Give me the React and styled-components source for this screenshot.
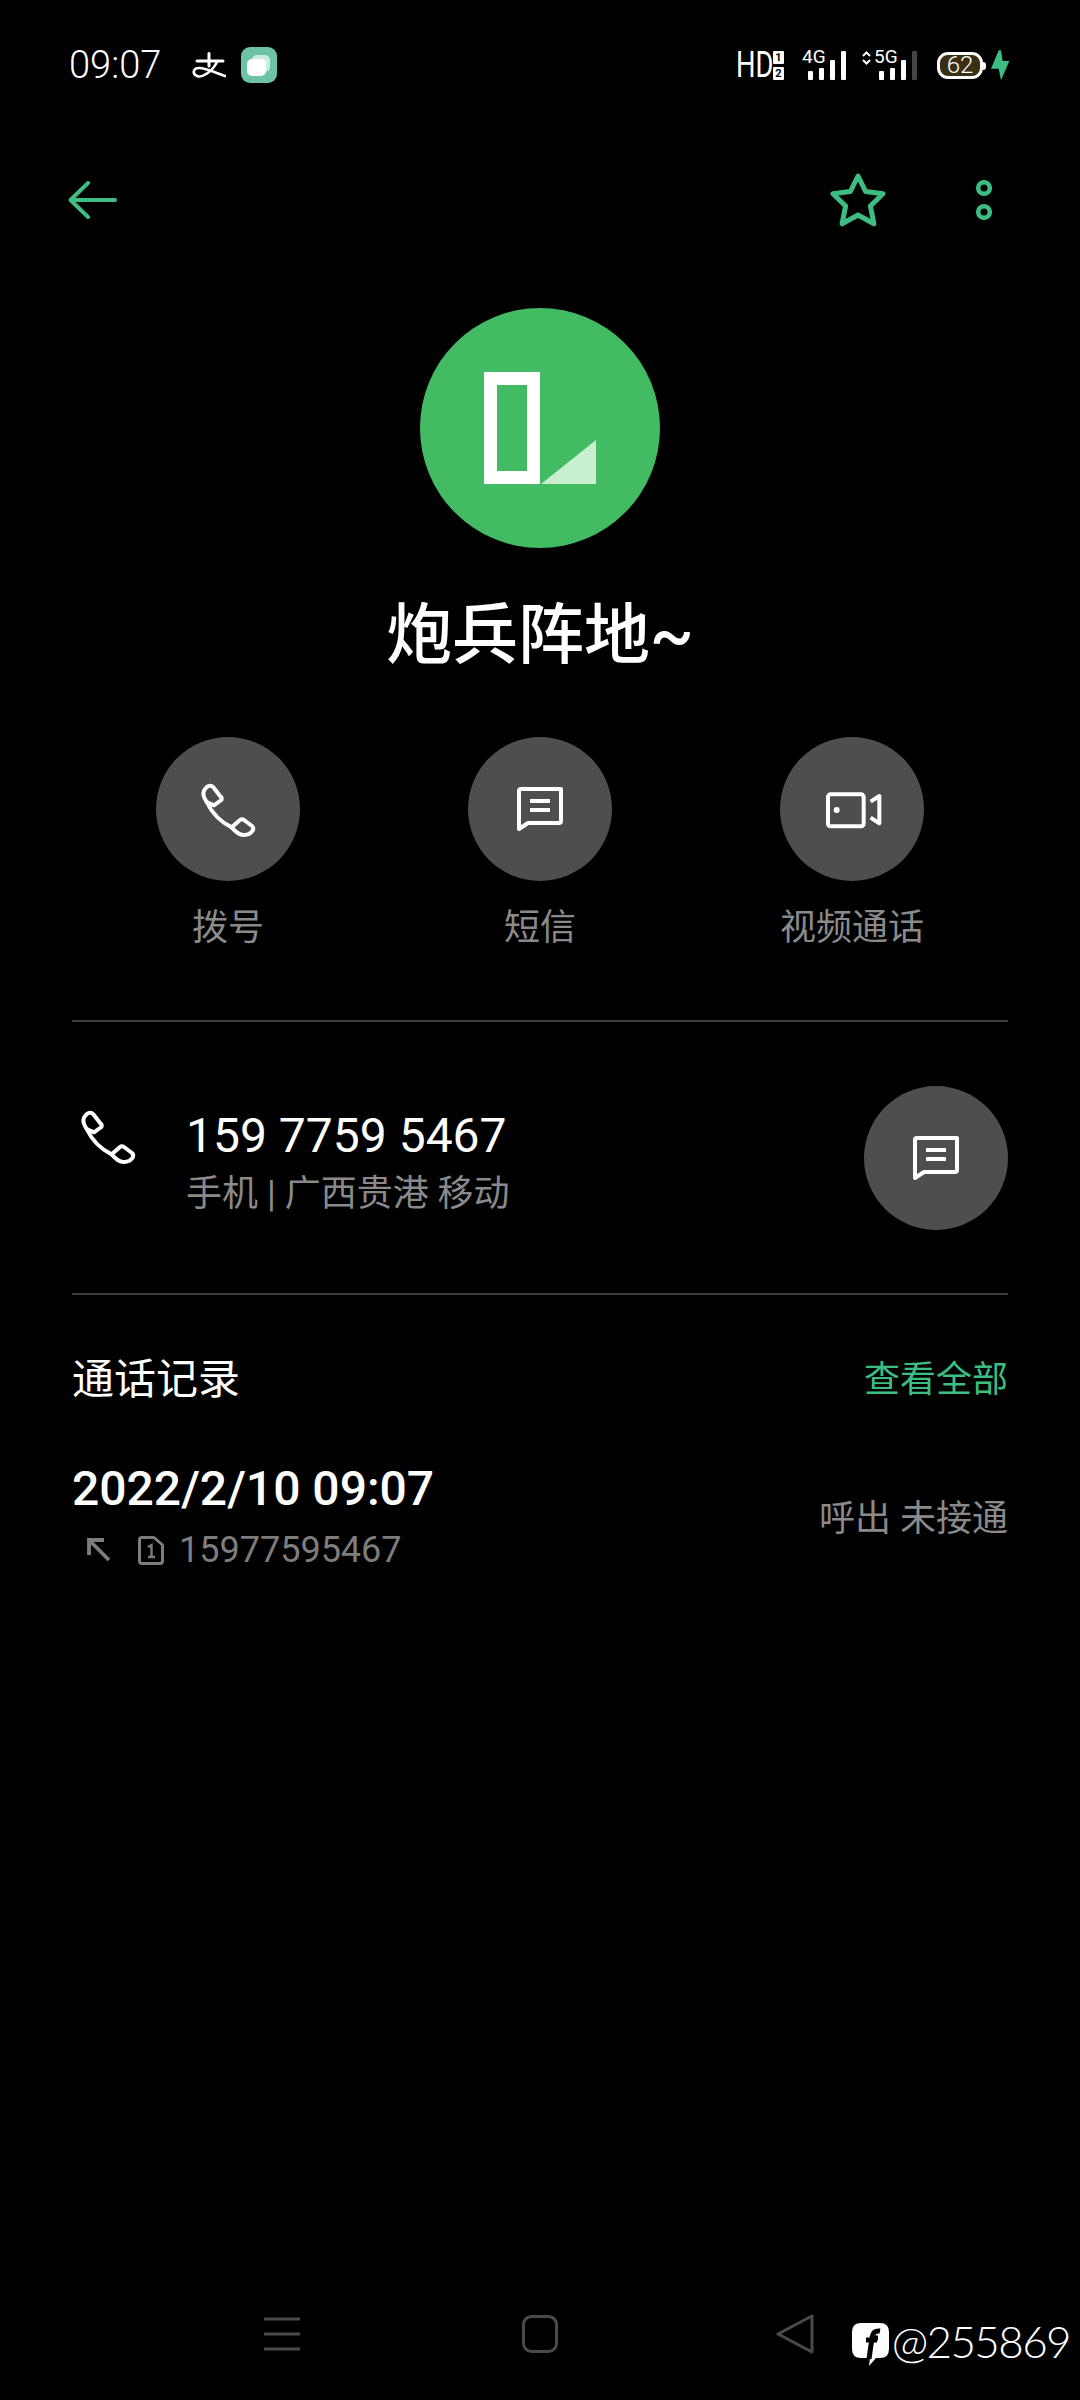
import React from "react";
import styled, { createGlobalStyle } from "styled-components";

const GREEN = "#3dbd82";
const GREY = "#8a8a8a";
const FONT = `Roboto, "Noto Sans CJK SC", sans-serif`;

const Global = createGlobalStyle`
  html, body { margin: 0; padding: 0; background: #000; }
  * { box-sizing: border-box; }
`;

const Page = styled.div`
  width: 1080px;
  height: 2400px;
  background: #000;
  color: #fff;
  font-family: ${FONT};
  display: flex;
  flex-direction: column;
  position: relative;
  overflow: hidden;
`;

const StatusBar = styled.div`
  height: 130px;
  padding: 0 70px 0 69px;
  display: flex;
  align-items: center;
  justify-content: space-between;
`;
const StatusLeft = styled.div`
  display: flex;
  align-items: center;
`;
const Clock = styled.span`
  font-size: 38px;
  font-weight: 300;
  line-height: 40px;
  width: 93px;
  margin-right: 30px;
`;
const AlipaySlot = styled.svg`
  margin-right: 15px;
`;
const StatusRight = styled.div`
  display: flex;
  align-items: center;
  height: 36px;
`;
const HdText = styled.span`
  display: block;
  width: 36px;
  font-size: 36px;
  line-height: 30px;
  font-weight: 400;
  transform: scaleX(0.76);
  transform-origin: left center;
`;
const SimStack = styled.div`
  display: flex;
  flex-direction: column;
  gap: 3px;
  margin-left: 1px;
  margin-right: 18px;
`;
const SimBadge = styled.span`
  display: block;
  width: 11px;
  height: 13px;
  border-radius: 1px;
  background: #fff;
  color: #000;
  font-size: 11px;
  line-height: 13px;
  font-weight: 700;
  text-align: center;
`;
const Signal = styled.div`
  position: relative;
  width: ${(p) => p.$w}px;
  height: 30px;
  display: flex;
  align-items: flex-end;
  justify-content: flex-end;
  gap: 6px;
  margin-right: ${(p) => p.$mr}px;
`;
const SignalLabel = styled.span`
  position: absolute;
  left: ${(p) => p.$left || 0}px;
  top: -3px;
  font-size: 19px;
  line-height: 20px;
  font-weight: 400;
`;
const Bar = styled.span`
  display: block;
  width: 5px;
  height: ${(p) => p.$h}px;
  border-radius: 1px;
  background: ${(p) => (p.$off ? "#444" : "#fff")};
`;
const Arrows = styled.svg`
  position: absolute;
  left: 0;
  top: 1px;
`;
const Battery = styled.div`
  position: relative;
  width: 46px;
  height: 27px;
  border: 3px solid #fff;
  border-radius: 11px;
  background: #3a2f12;
  display: flex;
  align-items: center;
  justify-content: center;
  font-size: 24px;
  font-weight: 300;
  line-height: 20px;
`;
const BatteryNib = styled.span`
  position: absolute;
  right: -6px;
  top: 7px;
  width: 3px;
  height: 8px;
  border-radius: 0 3px 3px 0;
  background: #fff;
`;
const Bolt = styled.svg`
  margin-left: 8px;
`;

const TopBar = styled.div`
  height: 140px;
  padding: 0 68px;
  display: flex;
  align-items: center;
  justify-content: space-between;
`;
const TopActions = styled.div`
  display: flex;
  align-items: center;
  gap: 90px;
  padding-right: 20px;
`;

const AvatarCircle = styled.div`
  width: 240px;
  height: 240px;
  margin: 38px auto 0;
  border-radius: 50%;
  background: #43bb63;
  display: flex;
`;
const Name = styled.h1`
  margin: 48px 0 0;
  height: 80px;
  font-size: 66px;
  line-height: 80px;
  font-weight: 500;
  text-align: center;
`;

const Actions = styled.div`
  margin-top: 61px;
  padding: 0 72px;
  display: grid;
  grid-template-columns: repeat(3, 312px);
`;
const Action = styled.div`
  display: flex;
  flex-direction: column;
  align-items: center;
  gap: 23px;
`;
const RoundButton = styled.div`
  width: 144px;
  height: 144px;
  border-radius: 50%;
  background: #4e4e4e;
  display: flex;
  align-items: center;
  justify-content: center;
`;
const ActionLabel = styled.span`
  font-size: 36px;
  line-height: 48px;
  color: ${GREY};
`;

const Divider = styled.div`
  height: 2px;
  margin: ${(p) => p.$mt || 0}px 72px 0;
  background: #3c3c3c;
`;

const PhoneRow = styled.div`
  height: 271px;
  padding: 0 72px 0 0;
  display: flex;
  align-items: center;
`;
const PhoneIconSlot = styled.div`
  width: 186px;
  padding-left: 68px;
  display: flex;
  margin-top: -44px;
`;
const PhoneText = styled.div`
  flex: 1;
  padding-top: 9px;
  display: flex;
  flex-direction: column;
  gap: 3px;
`;
const PhoneNumber = styled.div`
  font-size: 48px;
  line-height: 60px;
`;
const PhoneMeta = styled.div`
  font-size: 36px;
  line-height: 50px;
  color: ${GREY};
`;

const LogHeader = styled.div`
  height: 164px;
  padding: 6px 72px 0;
  display: flex;
  align-items: center;
  justify-content: space-between;
`;
const LogTitle = styled.span`
  font-size: 42px;
  line-height: 56px;
`;
const LogLink = styled.span`
  font-size: 36px;
  line-height: 48px;
  color: ${GREEN};
`;
const LogRow = styled.div`
  padding: 0 72px;
  display: flex;
  align-items: center;
  justify-content: space-between;
`;
const LogMain = styled.div`
  display: flex;
  flex-direction: column;
  gap: 6px;
`;
const LogDate = styled.div`
  font-size: 48px;
  line-height: 60px;
  font-weight: 500;
`;
const LogSub = styled.div`
  display: flex;
  align-items: center;
  height: 50px;
  padding-left: 15px;
  gap: 18px;
  font-size: 36px;
  color: #7d7d7d;
`;
const SimIcon = styled.svg`
  margin: 0 -3px 0 9px;
`;
const LogStatus = styled.span`
  margin-top: 3px;
  font-size: 36px;
  line-height: 48px;
  color: ${GREY};
`;

const NavBar = styled.div`
  margin-top: auto;
  height: 132px;
  display: flex;
  align-items: center;
  justify-content: center;
`;
const NavSlot = styled.div`
  width: 258px;
  padding-right: ${(p) => p.$pr || 0}px;
  display: flex;
  justify-content: center;
`;
const Watermark = styled.div`
  position: absolute;
  right: 10px;
  bottom: 34px;
  display: flex;
  align-items: center;
  gap: 3px;
  font-family: Lato, sans-serif;
  font-weight: 300;
  font-size: 44px;
  line-height: 50px;
  letter-spacing: -1.6px;
  color: #fff;
`;
const WatermarkLogo = styled.svg`
  margin-top: 6px;
`;

const PhoneIcon = () => (
  <svg width="80" height="80" viewBox="-6 -3 240 240" fill="none" stroke="#fff" strokeWidth="12" strokeLinejoin="round" strokeLinecap="round">
    <path d="M60 47 Q50 47 42 62 Q36 75 50 96 L72 106 L94 90 Q97 84 92 80 L70 52 Q66 47 60 47 Z" />
    <path d="M125 172 L150 150 Q155 146 162 150 L186 168 Q192 174 188 182 Q178 196 160 195 Q145 195 125 172 Z" />
    <path d="M50 96 Q75 148 125 172" />
  </svg>
);

const MessageIcon = () => (
  <svg width="46" height="44" viewBox="0 0 46 44" fill="none">
    <path d="M2 42 V4 Q2 2 4 2 H44 V34 Q44 36 42 36 H11 Z" stroke="#fff" strokeWidth="4" strokeLinejoin="round" />
    <path d="M13 14 H33 M13 23 H33" stroke="#fff" strokeWidth="4" />
  </svg>
);

const VideoIcon = () => (
  <svg width="100" height="80" viewBox="6 -3 300 240" fill="none" stroke="#fff" strokeWidth="12" strokeLinejoin="round">
    <rect x="84" y="73" width="107" height="96" rx="8" />
    <circle cx="110" cy="120" r="9" fill="#fff" stroke="none" />
    <path d="M212 95 L238 78 V160 L212 143" />
  </svg>
);

const AppBadge = () => (
  <svg width="36" height="36" viewBox="0 0 36 36">
    <rect width="36" height="36" rx="9" fill="#6cc4a4" />
    <rect x="11" y="8" width="18" height="17" rx="5" fill="#c9ecdf" />
    <rect x="6" y="12" width="19" height="17" rx="5" fill="#fff" />
  </svg>
);

const AlipayGlyph = () => (
  <AlipaySlot width="34" height="26" viewBox="0 0 34 26" fill="none" stroke="#fff" strokeLinecap="round">
    <path d="M5 9 H31" strokeWidth="3" />
    <path d="M17 1.5 V14" strokeWidth="3" />
    <path d="M25 10 C20 20 10 26 5 24 C0 22 1 16 7 16 C14 16 24 21 33 24" strokeWidth="2.6" />
  </AlipaySlot>
);

export default function App() {
  return (
    <Page>
      <Global />
      <StatusBar>
        <StatusLeft>
          <Clock>09:07</Clock>
          <AlipayGlyph />
          <AppBadge />
        </StatusLeft>
        <StatusRight>
          <HdText>HD</HdText>
          <SimStack>
            <SimBadge>1</SimBadge>
            <SimBadge>2</SimBadge>
          </SimStack>
          <Signal $w={44} $mr={16}>
            <SignalLabel>4G</SignalLabel>
            <Bar $h={9} />
            <Bar $h={12} />
            <Bar $h={20} />
            <Bar $h={29} />
          </Signal>
          <Signal $w={55} $mr={20}>
            <Arrows width="9" height="14" viewBox="0 0 9 14" fill="none" stroke="#fff" strokeWidth="2">
              <path d="M1 5 L4.5 1.5 L8 5 M1 9 L4.5 12.5 L8 9" />
            </Arrows>
            <SignalLabel $left={12}>5G</SignalLabel>
            <Bar $h={9} />
            <Bar $h={12} />
            <Bar $h={20} />
            <Bar $h={29} $off />
          </Signal>
          <Battery>
            62
            <BatteryNib />
          </Battery>
          <Bolt width="19" height="31" viewBox="0 0 19 31">
            <path d="M7.7 0.3 L0 18.7 H7.7 L10 30.3 L18.3 11 H11.7 L10 0.3 Z" fill={GREEN} />
          </Bolt>
        </StatusRight>
      </StatusBar>

      <TopBar>
        <svg width="50" height="38" viewBox="0 0 50 38" fill="none" stroke={GREEN} strokeWidth="4" strokeLinecap="round" strokeLinejoin="round">
          <path d="M2.5 19 H47 M20 2 L2.5 19 L20 36" />
        </svg>
        <TopActions>
          <svg width="56" height="54" viewBox="0 0 56 54" fill="none" stroke={GREEN} strokeWidth="5" strokeLinejoin="round">
            <path d="M28 3 L35.6 18.5 L53 20.7 L40.4 33 L43.9 50.8 L28 42 L12.1 50.8 L15.6 33 L3 20.7 L20.4 18.5 Z" />
          </svg>
          <svg width="16" height="40" viewBox="0 0 16 40" fill="none" stroke={GREEN} strokeWidth="4.5">
            <circle cx="8" cy="8" r="5.8" />
            <circle cx="8" cy="32" r="5.8" />
          </svg>
        </TopActions>
      </TopBar>

      <AvatarCircle>
        <svg width="240" height="240" viewBox="0 0 240 240" fill="none">
          <rect x="70.5" y="70.5" width="43" height="99" stroke="#fff" strokeWidth="13" />
          <path d="M121 176 H176 V132 Z" fill="#c9efd1" />
        </svg>
      </AvatarCircle>
      <Name>炮兵阵地~</Name>

      <Actions>
        <Action>
          <RoundButton><PhoneIcon /></RoundButton>
          <ActionLabel>拨号</ActionLabel>
        </Action>
        <Action>
          <RoundButton><MessageIcon /></RoundButton>
          <ActionLabel>短信</ActionLabel>
        </Action>
        <Action>
          <RoundButton><VideoIcon /></RoundButton>
          <ActionLabel>视频通话</ActionLabel>
        </Action>
      </Actions>

      <Divider $mt={68} />
      <PhoneRow>
        <PhoneIconSlot><PhoneIcon /></PhoneIconSlot>
        <PhoneText>
          <PhoneNumber>159 7759 5467</PhoneNumber>
          <PhoneMeta>手机 | 广西贵港 移动</PhoneMeta>
        </PhoneText>
        <RoundButton><MessageIcon /></RoundButton>
      </PhoneRow>
      <Divider />

      <LogHeader>
        <LogTitle>通话记录</LogTitle>
        <LogLink>查看全部</LogLink>
      </LogHeader>
      <LogRow>
        <LogMain>
          <LogDate>2022/2/10 09:07</LogDate>
          <LogSub>
            <svg width="24" height="24" viewBox="0 0 24 24" fill="none" stroke="#7d7d7d" strokeWidth="3.8">
              <path d="M2 17 V2 H17 M2 2 L22 22" />
            </svg>
            <SimIcon width="26" height="29" viewBox="0 0 26 29" fill="none">
              <path d="M4 1.5 H16 L24.5 9 V25 Q24.5 27.5 22 27.5 H4 Q1.5 27.5 1.5 25 V4 Q1.5 1.5 4 1.5 Z" stroke="#7d7d7d" strokeWidth="3" strokeLinejoin="round" />
              <path d="M10 11 L13.5 9 V21 M10 21 H17" stroke="#7d7d7d" strokeWidth="2.4" />
            </SimIcon>
            <span>15977595467</span>
          </LogSub>
        </LogMain>
        <LogStatus>呼出 未接通</LogStatus>
      </LogRow>

      <NavBar>
        <NavSlot>
          <svg width="36" height="34" viewBox="0 0 36 34" stroke="#4a4a4a" strokeWidth="3">
            <path d="M0 2 H36 M0 17 H36 M0 32 H36" />
          </svg>
        </NavSlot>
        <NavSlot>
          <svg width="36" height="38" viewBox="0 0 36 38" fill="none" stroke="#4a4a4a" strokeWidth="3">
            <rect x="1.5" y="1.5" width="33" height="35" rx="8" />
          </svg>
        </NavSlot>
        <NavSlot $pr={6}>
          <svg width="38" height="40" viewBox="0 0 38 40" fill="none" stroke="#4a4a4a" strokeWidth="3" strokeLinejoin="round">
            <path d="M36 2 V38 L2 20 Z" />
          </svg>
        </NavSlot>
      </NavBar>
      <Watermark>
        <WatermarkLogo width="37" height="43" viewBox="0 0 37 43">
          <path d="M9 0 H28 Q37 0 37 9 V26 Q37 35 28 35 H24 L17 43 L18 35 H9 Q0 35 0 26 V9 Q0 0 9 0 Z" fill="#fff" />
          <path d="M17 36 L20 15 H26 M14 17 H25 M20 15 Q21 7 28 8" fill="none" stroke="#000" strokeWidth="5" />
        </WatermarkLogo>
        <span>@255869</span>
      </Watermark>
    </Page>
  );
}
